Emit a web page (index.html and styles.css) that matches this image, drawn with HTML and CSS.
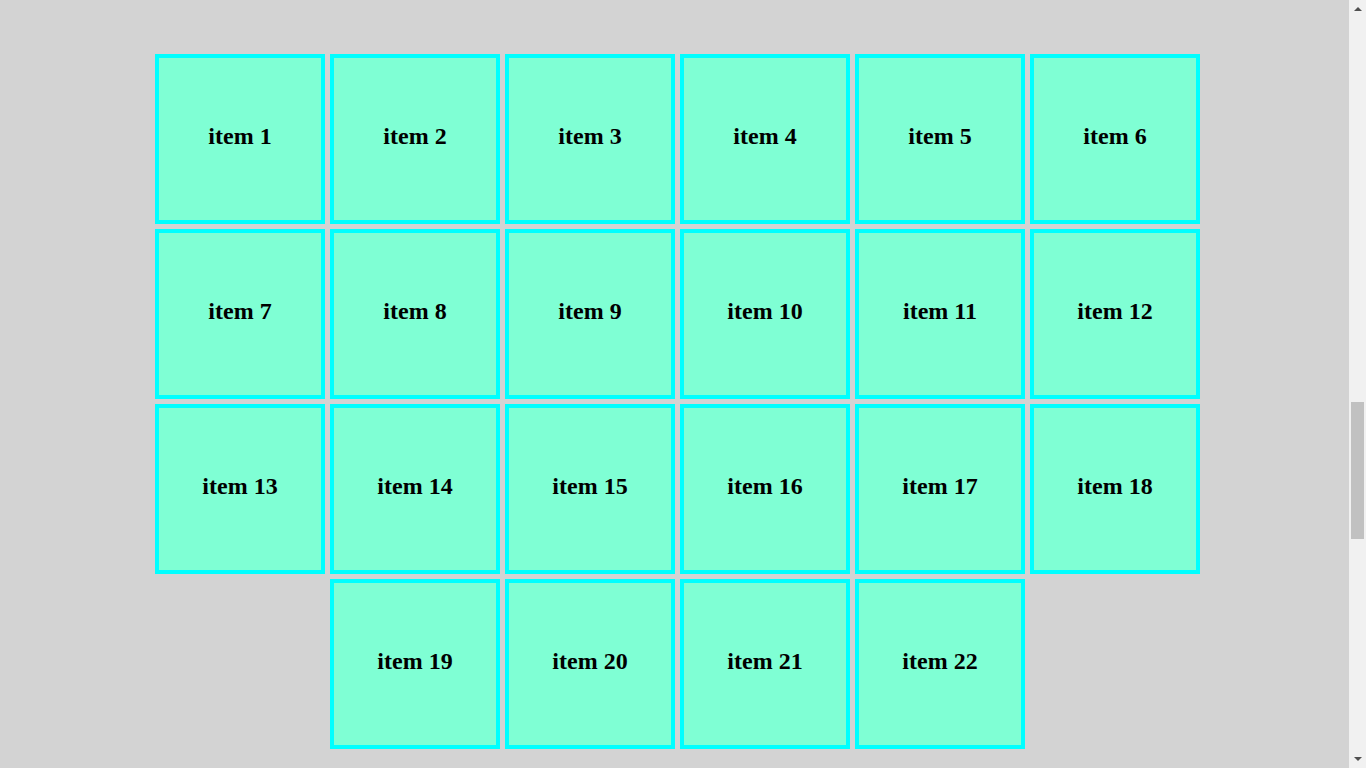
FILE: index.html
```html
<!DOCTYPE html>
<html lang="en">
<head>
<meta charset="utf-8">
<title>Flex items</title>
<link rel="stylesheet" href="styles.css">
</head>
<body>
<main class="page">
  <div class="grid">
    <div class="item">item 1</div>
    <div class="item">item 2</div>
    <div class="item">item 3</div>
    <div class="item">item 4</div>
    <div class="item">item 5</div>
    <div class="item">item 6</div>
    <div class="item">item 7</div>
    <div class="item">item 8</div>
    <div class="item">item 9</div>
    <div class="item">item 10</div>
    <div class="item">item 11</div>
    <div class="item">item 12</div>
    <div class="item">item 13</div>
    <div class="item">item 14</div>
    <div class="item">item 15</div>
    <div class="item">item 16</div>
    <div class="item">item 17</div>
    <div class="item">item 18</div>
    <div class="item">item 19</div>
    <div class="item">item 20</div>
    <div class="item">item 21</div>
    <div class="item">item 22</div>
  </div>
</main>
<div class="scrollbar" aria-hidden="true">
  <svg class="arrow arrow-up" width="8" height="4" viewBox="0 0 8 4"><polygon points="0,4 8,4 4,0" fill="#505050"/></svg>
  <div class="track"><div class="thumb"></div></div>
  <svg class="arrow arrow-down" width="8" height="4" viewBox="0 0 8 4"><polygon points="0,0 8,0 4,4" fill="#505050"/></svg>
</div>
</body>
</html>
```

FILE: styles.css
```css
html, body {
  margin: 0;
  padding: 0;
}

body {
  background: #d3d3d3;
  font-family: "Liberation Serif", "Times New Roman", serif;
  padding-right: 17px;
  height: 768px;
  box-sizing: border-box;
  overflow: hidden;
}

.page {
  padding-top: 54px;
}

.grid {
  width: 1045px;
  margin: 0 auto;
  padding-left: 6px;
  display: flex;
  flex-wrap: wrap;
  justify-content: center;
  gap: 5px;
}

.item {
  width: 170px;
  height: 170px;
  box-sizing: border-box;
  border: 4px solid #00ffff;
  background: #7fffd4;
  display: flex;
  align-items: center;
  justify-content: center;
  padding-bottom: 6px;
  font-size: 24px;
  font-weight: bold;
  color: #000;
}

.scrollbar {
  position: fixed;
  top: 0;
  right: 0;
  width: 17px;
  height: 768px;
  background: #f1f1f1;
  display: flex;
  flex-direction: column;
  align-items: center;
}

.arrow {
  flex: none;
  margin: 7px 0 6px;
}

.arrow-down {
  margin: 6px 0 7px;
}

.track {
  flex: 1;
  width: 100%;
  padding: 385px 2px 0;
  box-sizing: border-box;
}

.thumb {
  height: 137px;
  background: #c1c1c1;
}
```
